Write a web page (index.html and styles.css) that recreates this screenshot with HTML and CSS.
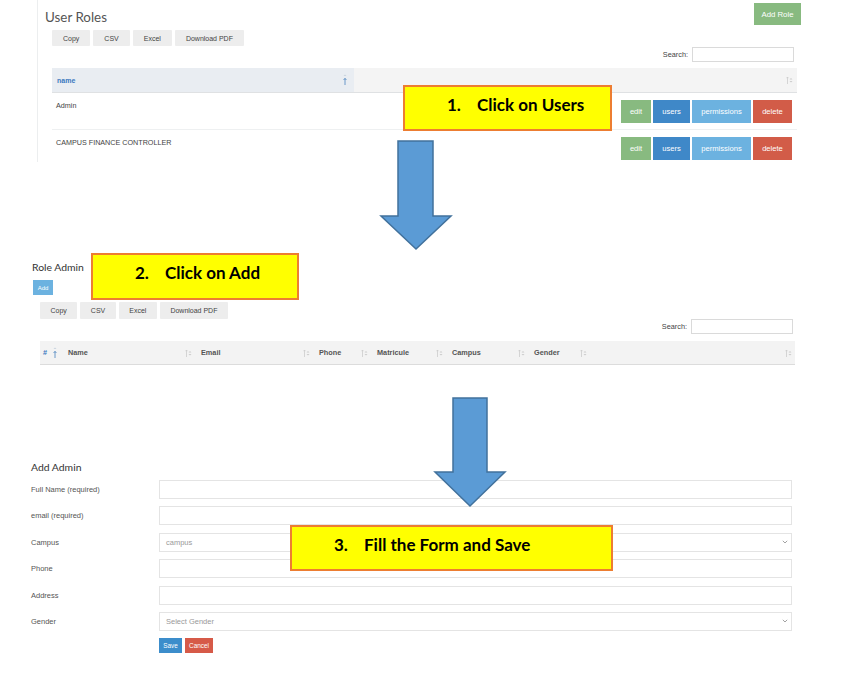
FILE: index.html
```html
<!DOCTYPE html>
<html lang="en">
<head>
<meta charset="utf-8">
<title>Roles walkthrough</title>
<link rel="stylesheet" href="styles.css">
</head>
<body>
<div class="page">

  <section class="roles">
    <div class="roles-head">
      <h2 class="title">User Roles</h2>
      <button class="btn btn-green add-role">Add Role</button>
    </div>
    <div class="tools tools-1">
      <button class="tbtn">Copy</button>
      <button class="tbtn">CSV</button>
      <button class="tbtn">Excel</button>
      <button class="tbtn">Download PDF</button>
    </div>
    <div class="search search-1"><span>Search:</span><input class="search-input" type="text"></div>
    <div class="dt1">
      <div class="dt1-head">
        <div class="th th-name">name
          <svg class="sort-act" width="6" height="12" viewBox="0 0 6 12"><path d="M1.5 3 L3 1.5 L4.5 3 Z" fill="#c9d3de"/><path d="M3 12 V5.5 M1.6 7 L3 5.3 L4.4 7" stroke="#5b8fc4" stroke-width="0.9" fill="none"/></svg>
        </div>
        <div class="th th-rest"><svg class="sort" width="7" height="8" viewBox="0 0 7 8"><path d="M1.5 8 V1 M0.5 2.2 L1.5 1 L2.5 2.2" stroke="#ccc" stroke-width="0.8" fill="none"/><path d="M3.5 3.5 L5 2 L6.5 3.5 Z M3.5 5 L5 6.5 L6.5 5 Z" fill="#ccc"/></svg></div>
      </div>
      <div class="dt1-row">
        <div class="td-name">Admin</div>
        <div class="td-actions">
          <button class="btn btn-green">edit</button><button class="btn btn-blue">users</button><button class="btn btn-light">permissions</button><button class="btn btn-red">delete</button>
        </div>
      </div>
      <div class="dt1-row">
        <div class="td-name">CAMPUS FINANCE CONTROLLER</div>
        <div class="td-actions">
          <button class="btn btn-green">edit</button><button class="btn btn-blue">users</button><button class="btn btn-light">permissions</button><button class="btn btn-red">delete</button>
        </div>
      </div>
    </div>
  </section>

  <section class="admins">
    <h2 class="subtitle">Role Admin</h2>
    <button class="btn btn-light add-btn">Add</button>
    <div class="tools tools-2">
      <button class="tbtn">Copy</button>
      <button class="tbtn">CSV</button>
      <button class="tbtn">Excel</button>
      <button class="tbtn">Download PDF</button>
    </div>
    <div class="search search-2"><span>Search:</span><input class="search-input" type="text"></div>
    <div class="dt2-head">
      <div class="th2 th-hash"><span class="hash">#</span>
        <svg class="sort-act" width="6" height="12" viewBox="0 0 6 12"><path d="M1.5 3 L3 1.5 L4.5 3 Z" fill="#c9d3de"/><path d="M3 12 V5.5 M1.6 7 L3 5.3 L4.4 7" stroke="#5b8fc4" stroke-width="0.9" fill="none"/></svg>
      </div>
      <div class="th2"><span>Name</span><svg class="sort" width="7" height="8" viewBox="0 0 7 8"><path d="M1.5 8 V1 M0.5 2.2 L1.5 1 L2.5 2.2" stroke="#ccc" stroke-width="0.8" fill="none"/><path d="M3.5 3.5 L5 2 L6.5 3.5 Z M3.5 5 L5 6.5 L6.5 5 Z" fill="#ccc"/></svg></div>
      <div class="th2"><span>Email</span><svg class="sort" width="7" height="8" viewBox="0 0 7 8"><path d="M1.5 8 V1 M0.5 2.2 L1.5 1 L2.5 2.2" stroke="#ccc" stroke-width="0.8" fill="none"/><path d="M3.5 3.5 L5 2 L6.5 3.5 Z M3.5 5 L5 6.5 L6.5 5 Z" fill="#ccc"/></svg></div>
      <div class="th2"><span>Phone</span><svg class="sort" width="7" height="8" viewBox="0 0 7 8"><path d="M1.5 8 V1 M0.5 2.2 L1.5 1 L2.5 2.2" stroke="#ccc" stroke-width="0.8" fill="none"/><path d="M3.5 3.5 L5 2 L6.5 3.5 Z M3.5 5 L5 6.5 L6.5 5 Z" fill="#ccc"/></svg></div>
      <div class="th2"><span>Matricule</span><svg class="sort" width="7" height="8" viewBox="0 0 7 8"><path d="M1.5 8 V1 M0.5 2.2 L1.5 1 L2.5 2.2" stroke="#ccc" stroke-width="0.8" fill="none"/><path d="M3.5 3.5 L5 2 L6.5 3.5 Z M3.5 5 L5 6.5 L6.5 5 Z" fill="#ccc"/></svg></div>
      <div class="th2"><span>Campus</span><svg class="sort" width="7" height="8" viewBox="0 0 7 8"><path d="M1.5 8 V1 M0.5 2.2 L1.5 1 L2.5 2.2" stroke="#ccc" stroke-width="0.8" fill="none"/><path d="M3.5 3.5 L5 2 L6.5 3.5 Z M3.5 5 L5 6.5 L6.5 5 Z" fill="#ccc"/></svg></div>
      <div class="th2"><span>Gender</span><svg class="sort" width="7" height="8" viewBox="0 0 7 8"><path d="M1.5 8 V1 M0.5 2.2 L1.5 1 L2.5 2.2" stroke="#ccc" stroke-width="0.8" fill="none"/><path d="M3.5 3.5 L5 2 L6.5 3.5 Z M3.5 5 L5 6.5 L6.5 5 Z" fill="#ccc"/></svg></div>
      <div class="th2"><span></span><svg class="sort" width="7" height="8" viewBox="0 0 7 8"><path d="M1.5 8 V1 M0.5 2.2 L1.5 1 L2.5 2.2" stroke="#ccc" stroke-width="0.8" fill="none"/><path d="M3.5 3.5 L5 2 L6.5 3.5 Z M3.5 5 L5 6.5 L6.5 5 Z" fill="#ccc"/></svg></div>
    </div>
  </section>

  <section class="addform">
    <h2 class="subtitle">Add Admin</h2>
    <div class="fields">
      <label class="flabel">Full Name (required)</label><div class="finput"></div>
      <label class="flabel">email (required)</label><div class="finput"></div>
      <label class="flabel">Campus</label><div class="finput fselect"><span class="ph">campus</span><svg class="chev" width="6" height="4" viewBox="0 0 6 4"><path d="M0.8 0.8 L3 3 L5.2 0.8" stroke="#999" stroke-width="0.9" fill="none"/></svg></div>
      <label class="flabel">Phone</label><div class="finput"></div>
      <label class="flabel">Address</label><div class="finput"></div>
      <label class="flabel">Gender</label><div class="finput fselect"><span class="ph">Select Gender</span><svg class="chev" width="6" height="4" viewBox="0 0 6 4"><path d="M0.8 0.8 L3 3 L5.2 0.8" stroke="#999" stroke-width="0.9" fill="none"/></svg></div>
      <div></div>
      <div class="factions"><button class="btn btn-save">Save</button><button class="btn btn-cancel">Cancel</button></div>
    </div>
  </section>

  <div class="callout callout-1"><span class="num">1.</span>Click on Users</div>
  <div class="callout callout-2"><span class="num">2.</span>Click on Add</div>
  <div class="callout callout-3"><span class="num">3.</span>Fill the Form and Save</div>

  <svg class="arrow arrow-1" width="74" height="112" viewBox="0 0 74 112"><polygon points="19,2 54,2 54,77 72,77 37,110 2,77 19,77" fill="#5b9bd5" stroke="#41719c" stroke-width="1.5" stroke-linejoin="miter"/></svg>
  <svg class="arrow arrow-2" width="74" height="112" viewBox="0 0 74 112"><polygon points="20,2 54,2 54,76 72,76 37,110 2,76 20,76" fill="#5b9bd5" stroke="#41719c" stroke-width="1.5" stroke-linejoin="miter"/></svg>
</div>
</body>
</html>
```
FILE: styles.css
```css
* { box-sizing: border-box; }
html, body { margin: 0; padding: 0; background: #fff; }
body { font-family: "Liberation Sans", Arial, sans-serif; color: #333; }

.page { position: relative; width: 841px; height: 676px; overflow: hidden; }

button { font-family: "Liberation Sans", Arial, sans-serif; border: 0; margin: 0; cursor: pointer; }

.btn { color: #fff; font-size: 7.6px; padding: 0; display: inline-flex; align-items: center; justify-content: center; }
.btn-green { background: #88ba80; }
.btn-blue { background: #3f88c8; }
.btn-light { background: #6cb2e0; }
.btn-red { background: #d25c48; }

/* ---------- section 1 ---------- */
.roles { margin-left: 37px; width: 765px; height: 162px; border-left: 1px solid #eceeef; overflow: hidden; }
.roles-head { height: 30px; display: flex; justify-content: space-between; align-items: flex-start; padding-left: 7px; }
.title { margin: 0; padding-top: 8px; font-family: Lato, "Open Sans", sans-serif; font-weight: 400; font-size: 13.4px; line-height: 19px; color: #555; }
.add-role { margin-top: 3px; margin-right: 1px; width: 47px; height: 22px; font-size: 7.8px; }

.tools { display: flex; gap: 3px; }
.tbtn { background: #ededed; color: #444; font-size: 7px; padding: 0 11px; border-radius: 1px; }
.tools-1 { margin-left: 14px; height: 16px; }

.search { display: flex; justify-content: flex-end; align-items: center; gap: 4px; font-size: 7.3px; color: #444; }
.search-input { border: 1px solid #dadada; height: 15px; padding: 0; margin: 0; background: #fff; }
.search-1 { margin-top: 1px; margin-left: 14px; width: 745px; padding-right: 3px; }
.search-1 .search-input { width: 102px; }

.dt1 { margin-top: 6px; margin-left: 14px; width: 745px; }
.dt1-head { display: grid; grid-template-columns: 302px 1fr; height: 25px; border-bottom: 1px solid #dfe1e3; }
.th { display: flex; align-items: center; justify-content: space-between; padding: 0 6px 0 5px; font-size: 7px; font-weight: bold; }
.th-name { background: #e9edf2; color: #3a78bf; }
.th-rest { background: #f4f4f4; justify-content: flex-end; padding-right: 4px; }
.sort-act { margin-top: -2px; }
.dt1-row { display: grid; grid-template-columns: 1fr auto; height: 37px; border-bottom: 1px solid #eef0f1; }
.td-name { padding: 8px 0 0 4px; font-size: 7.2px; line-height: 10px; color: #444; }
.td-actions { padding: 7px 5px 0 0; display: flex; gap: 2px; align-items: flex-start; }
.td-actions .btn { height: 23px; }
.td-actions .btn-green { width: 30px; }
.td-actions .btn-blue { width: 37px; }
.td-actions .btn-light { width: 59px; }
.td-actions .btn-red { width: 39px; }

/* ---------- section 2 ---------- */
.admins { margin-top: 98px; padding-left: 32px; }
.subtitle { margin: 0; font-family: Lato, "Open Sans", sans-serif; font-weight: 400; font-size: 10.4px; line-height: 14px; color: #333; }
.add-btn { margin-top: 6px; margin-left: 1px; width: 20px; height: 15px; font-size: 6px; }
.tools-2 { margin-top: 7px; margin-left: 8px; height: 17px; }
.tools-2 .tbtn { padding: 0 10.5px; }
.search-2 { width: 761px; padding-right: 0; }
.search-2 .search-input { width: 102px; }
.dt2-head { margin-top: 7px; margin-left: 8px; width: 755px; height: 24px; display: grid; grid-template-columns: 22px 133px 118px 58px 75px 82px 62px 1fr; background: #f3f3f3; border-bottom: 1px solid #dcdcdc; }
.th2 { display: flex; align-items: center; justify-content: space-between; padding: 0 3px 0 6px; font-size: 7.3px; font-weight: bold; color: #555; }
.th-hash { padding-left: 3px; justify-content: flex-start; gap: 5px; }
.hash { color: #3a78bf; }

/* ---------- section 3 ---------- */
.addform { margin-top: 95px; padding-left: 31px; }
.fields { margin-top: 6px; display: grid; grid-template-columns: 128px 633px; row-gap: 7.4px; align-items: center; }
.flabel { font-size: 7.5px; color: #555; }
.finput { height: 19px; border: 1px solid #e4e4e4; background: #fff; display: flex; align-items: center; justify-content: space-between; padding: 0 3px 0 6px; }
.ph { font-size: 7.5px; color: #9a9a9a; }
.factions { display: flex; gap: 3px; margin-top: 0; }
.btn-save { background: #3c8dcb; width: 23px; height: 15px; font-size: 6.4px; }
.btn-cancel { background: #d65a48; width: 28px; height: 15px; font-size: 6.4px; }

/* ---------- overlays ---------- */
.callout { position: absolute; background: #ffff00; border: 2px solid #ed7d31; font-family: Lato, "Open Sans", sans-serif; font-weight: 700; font-size: 17px; line-height: 20px; color: #000; padding: 8px 0 0 42px; white-space: nowrap; }
.callout .num { display: inline-block; width: 30px; }
.callout-1 { left: 403px; top: 85px; width: 209px; height: 46px; }
.callout-2 { left: 91px; top: 253px; width: 208px; height: 47px; }
.callout-3 { left: 290px; top: 525px; width: 323px; height: 46px; }

.arrow { position: absolute; }
.arrow-1 { left: 379px; top: 139px; }
.arrow-2 { left: 433px; top: 396px; }
```
